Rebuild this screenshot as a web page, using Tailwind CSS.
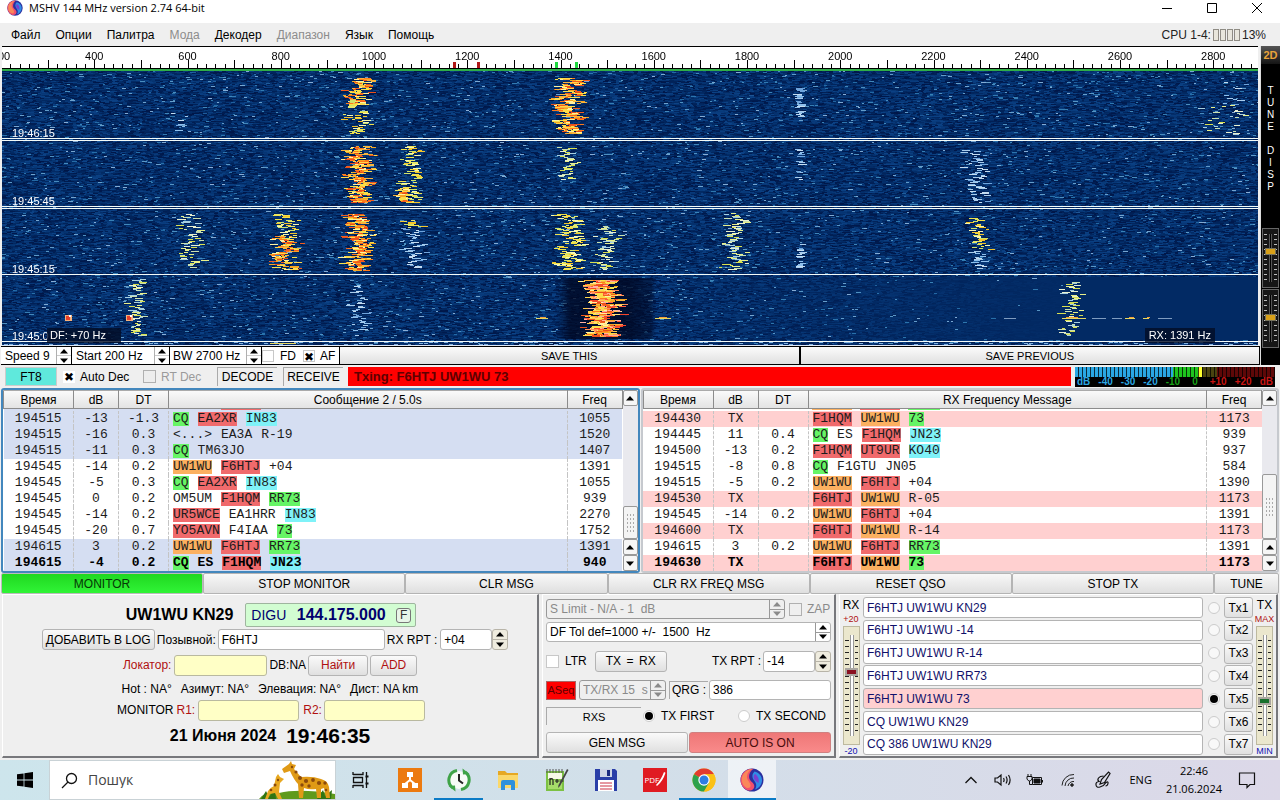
<!DOCTYPE html>
<html lang="ru">
<head>
<meta charset="utf-8">
<title>MSHV 144 MHz version 2.74 64-bit</title>
<script src="https://cdn.jsdelivr.net/npm/@tailwindcss/browser@4"></script>
</head>
<body class="min-h-screen flex flex-col overflow-x-hidden bg-[#efefef] text-black text-[12px] leading-4 font-['Liberation_Sans',sans-serif]">

<svg class="hidden" aria-hidden="true">
  <symbol id="up" viewBox="0 0 8 5"><path d="M4 0L8 4.5H0z" fill="currentColor"/></symbol>
  <symbol id="down" viewBox="0 0 8 5"><path d="M0 .5H8L4 5z" fill="currentColor"/></symbol>
  <symbol id="mshv" viewBox="0 0 24 24">
    <circle cx="12" cy="12" r="11.5" fill="#2b2f9e"/>
    <path d="M14 .8C6.500 0 .8 5 .6 12c0 5 3 9 7.500 10.500 4 .5 7-2 6-5.500-.8-3-5-4-5-8C9.100 5.500 11 2 14 .8z" fill="#f0506c"/>
    <path d="M12.500 1C6 1.500 2 6 1.800 11.500c0 4 2 7 5 8.500 3 .5 4.500-1.500 3.500-4C9 13 6.500 11.500 7 8c.4-3 2.500-6 5.500-7z" fill="#f9885a"/>
    <path d="M14.500 3.500c4.500 1 8 5 7.500 9.500-.5 4-3.500 7.500-7 8.500 2-3 1.500-6-.5-8.500-2.500-3-3-6.500 0-9.500z" fill="#2f8de6"/>
    <path d="M15 6c3 2 4.500 5 3.500 9-2-1-4.500-3-4.800-5.500C13.500 8 14 7 15 6z" fill="#7a3fd0"/>
  </symbol>
</svg>

<header class="h-[23px] bg-white flex items-start justify-between pl-[7px]">
  <div class="flex items-center gap-[6px]">
    <svg class="size-4"><use href="#mshv"/></svg>
    <h1 class="font-['Open_Sans',sans-serif] text-[11px] leading-4">MSHV 144 MHz version 2.74 64-bit</h1>
  </div>
  <div class="flex">
    <button aria-label="Minimize" class="w-[45px] h-4 grid place-items-center"><svg class="size-3" viewBox="0 0 12 12" fill="none" stroke="#000"><path d="M1 6.500h10"/></svg></button>
    <button aria-label="Maximize" class="w-[45px] h-4 grid place-items-center"><svg class="size-3" viewBox="0 0 12 12" fill="none" stroke="#000"><path d="M1.500 1.500h9v9h-9z"/></svg></button>
    <button aria-label="Close" class="w-[46px] h-4 grid place-items-center"><svg class="size-3" viewBox="0 0 12 12" fill="none" stroke="#000"><path d="M1 1l10 10M11 1L1 11"/></svg></button>
  </div>
</header>

<nav class="h-[23px] flex items-center justify-between pl-[11px] pr-[14px]">
  <div class="flex gap-[15px]">
    <button>Файл</button><button>Опции</button><button>Палитра</button><button class="text-[#8c8c8c]" disabled>Мода</button><button>Декодер</button><button class="text-[#8c8c8c]" disabled>Диапазон</button><button>Язык</button><button>Помощь</button>
  </div>
  <div class="flex items-center gap-[2px] text-[#222]">CPU 1-4:
    <span class="flex gap-px"><i class="w-[6px] h-3 border border-[#8f8c84] bg-[#e8e6dc]"></i><i class="w-[6px] h-3 border border-[#8f8c84] bg-[#e8e6dc]"></i><i class="w-[6px] h-3 border border-[#8f8c84] bg-[#e8e6dc]"></i><i class="w-[6px] h-3 border border-[#8f8c84] bg-[#e8e6dc]"></i></span>13%
  </div>
</nav>

<main class="flex flex-col">
  <section class="flex">
    <div class="flex-1 min-w-0 flex flex-col">
      <div class="relative h-[25px] ml-[2px] mr-[2px] bg-white border-t border-black border-b-2 border-b-[#2fae48] overflow-hidden">
        <canvas id="ruler" width="1256" height="22" class="block w-full h-[22px]"></canvas>
        <div id="marks"></div>
      </div>
      <div class="relative mx-[2px] border-b border-[#dfe8f5]">
        <canvas id="fall" width="1256" height="274" class="block w-full h-[274px] [image-rendering:pixelated]"></canvas>
        <div class="absolute inset-0 text-white text-[11px] leading-3">
          <span class="absolute left-[10px] top-[56px]">19:46:15</span>
          <span class="absolute left-[10px] top-[124px]">19:45:45</span>
          <span class="absolute left-[10px] top-[192px]">19:45:15</span>
          <span class="absolute left-[10px] top-[259px]">19:45:0</span>
          <span class="absolute left-[45px] top-[257px] w-[74px] h-[15px] pl-[3px] leading-[15px] bg-[#020c24]/80">DF: +70 Hz</span>
          <span class="absolute right-[43px] top-[257px] h-[15px] px-1 leading-[15px] bg-[#020c24]/80">RX: 1391 Hz</span>
        </div>
      </div>
      <div class="flex h-[19px] ml-[1px] border-y border-black bg-black gap-px">
        <div class="w-[70px] flex bg-white">
          <input aria-label="Speed" value="Speed 9" class="flex-1 min-w-0 pl-[4px] outline-none">
          <span class="w-[15px] flex flex-col border-l border-[#b0b0b0]"><button aria-label="Speed up" class="flex-1 grid place-items-center border-b border-[#ccc]"><svg class="w-2 h-[5px]"><use href="#up"/></svg></button><button aria-label="Speed down" class="flex-1 grid place-items-center"><svg class="w-2 h-[5px]"><use href="#down"/></svg></button></span>
        </div>
        <div class="w-[97px] flex bg-white">
          <input aria-label="Start frequency" value="Start 200 Hz" class="flex-1 min-w-0 pl-[4px] outline-none">
          <span class="w-[15px] flex flex-col border-l border-[#b0b0b0]"><button aria-label="Start up" class="flex-1 grid place-items-center border-b border-[#ccc]"><svg class="w-2 h-[5px]"><use href="#up"/></svg></button><button aria-label="Start down" class="flex-1 grid place-items-center"><svg class="w-2 h-[5px]"><use href="#down"/></svg></button></span>
        </div>
        <div class="w-[91px] flex bg-white">
          <input aria-label="Bandwidth" value="BW 2700 Hz" class="flex-1 min-w-0 pl-[3px] outline-none">
          <span class="w-[15px] flex flex-col border-l border-[#b0b0b0]"><button aria-label="Bandwidth up" class="flex-1 grid place-items-center border-b border-[#ccc]"><svg class="w-2 h-[5px]"><use href="#up"/></svg></button><button aria-label="Bandwidth down" class="flex-1 grid place-items-center"><svg class="w-2 h-[5px]"><use href="#down"/></svg></button></span>
        </div>
        <div class="w-[77px] flex items-center bg-white gap-[7px]">
          <label class="flex items-center gap-[6px]"><input type="checkbox" class="appearance-none size-3 border border-[#c8c8c8] bg-white">FD</label>
          <label class="flex items-center gap-[5px]"><input type="checkbox" checked class="appearance-none size-3 border border-[#c8c8c8] bg-white grid place-items-center checked:before:content-['✖'] before:text-[12px] before:leading-3 before:font-['DejaVu_Sans']">AF</label>
        </div>
        <button class="flex-1 text-[11px] bg-linear-to-b from-[#fbfbfb] to-[#e0e0e0]">SAVE THIS</button>
        <button class="flex-1 text-[11px] ml-px mr-px bg-linear-to-b from-[#fbfbfb] to-[#e0e0e0]">SAVE PREVIOUS</button>
      </div>
    </div>
    <aside class="w-5 bg-black flex flex-col items-center text-white text-[10px] leading-3 border-l border-[#ddd]">
      <button class="w-full h-[18px] bg-linear-to-b from-[#555] to-[#151515] text-[#e8a33a] text-[11px] font-bold">2D</button>
      <button class="w-3 mt-[21px] flex flex-col items-center"><span>T</span><span>U</span><span>N</span><span>E</span></button>
      <button class="w-3 mt-3 flex flex-col items-center"><span>D</span><span>I</span><span>S</span><span>P</span></button>
      <div class="mt-[35px] w-[17px] h-[60px] py-[5px] border border-[#666] bg-[#161616]">
        <input type="range" aria-label="Gain" value="66" class="block appearance-none w-full h-full [writing-mode:vertical-lr] [direction:rtl] bg-[linear-gradient(90deg,#161616_0_1px,transparent_1px_4px,#161616_4px_6px,#555_6px_7px,#000_7px_8px,#555_8px_9px,#161616_9px_11px,transparent_11px_14px,#161616_14px),repeating-linear-gradient(180deg,#bbb_0_1px,transparent_1px_5px)] [&::-webkit-slider-thumb]:appearance-none [&::-webkit-slider-thumb]:w-[11px] [&::-webkit-slider-thumb]:h-[7px] [&::-webkit-slider-thumb]:bg-[#d8a018] [&::-webkit-slider-thumb]:border [&::-webkit-slider-thumb]:border-[#77735c]">
      </div>
      <div class="mt-px w-[17px] h-[59px] py-[5px] border border-[#666] bg-[#161616]">
        <input type="range" aria-label="Zero" value="53" class="block appearance-none w-full h-full [writing-mode:vertical-lr] [direction:rtl] bg-[linear-gradient(90deg,#161616_0_1px,transparent_1px_4px,#161616_4px_6px,#555_6px_7px,#000_7px_8px,#555_8px_9px,#161616_9px_11px,transparent_11px_14px,#161616_14px),repeating-linear-gradient(180deg,#bbb_0_1px,transparent_1px_5px)] [&::-webkit-slider-thumb]:appearance-none [&::-webkit-slider-thumb]:w-[11px] [&::-webkit-slider-thumb]:h-[7px] [&::-webkit-slider-thumb]:bg-[#d8a018] [&::-webkit-slider-thumb]:border [&::-webkit-slider-thumb]:border-[#77735c]">
      </div>
    </aside>
  </section>

  <section class="h-[23px] flex items-center pl-[5px] pr-[5px]">
    <button class="w-[52px] h-[19px] bg-[#5fe9dc] border border-[#ccc]">FT8</button>
    <label class="ml-[6px] w-[79px] flex items-center gap-[5px]"><input type="checkbox" checked class="appearance-none size-3 bg-white grid place-items-center checked:before:content-['✖'] before:text-[12px] before:leading-3 before:font-['DejaVu_Sans']">Auto Dec</label>
    <label class="ml-px w-[66px] flex items-center gap-[5px] text-[#9a9a9a]"><input type="checkbox" disabled class="appearance-none size-[13px] border border-[#b0b0b0] bg-[#ededed]">RT Dec</label>
    <button class="ml-2 w-[60px] h-[19px] border-l border-t border-[#aaa]">DECODE</button>
    <button class="ml-[6px] w-[60px] h-[19px] border-l border-t border-[#aaa]">RECEIVE</button>
    <div class="ml-[5px] flex-1 h-[19px] pl-[6px] flex items-center bg-[#ff0000] text-[#5e0000] text-[13px] font-bold">Txing: F6HTJ UW1WU 73</div>
    <div class="ml-1 w-[200px] h-5 bg-black flex flex-col">
      <div class="h-[10px] bg-[repeating-linear-gradient(90deg,transparent_0_3px,rgba(0,0,0,.75)_3px_4px),linear-gradient(90deg,#2aa7e4_0_98px,#1ec41e_98px_123px,#ffff30_123px_127px,#4a4410_127px_142px,#5e0808_142px)]"></div>
      <div class="flex h-[10px] justify-between items-center px-[2px] text-[10px] leading-[10px] font-bold text-[#2aa7e4]"><span>dB</span><span>-40</span><span>-30</span><span>-20</span><span class="text-[#17a017]">-10</span><span class="text-[#17a017] px-1">0</span><span class="text-[#c81414]">+10</span><span class="text-[#c81414]">+20</span><span class="text-[#c81414]">dB</span></div>
    </div>
  </section>

  <section class="grid grid-cols-2 gap-px px-px">
    <div class="flex h-[185px] border-2 border-[#4387bd] rounded-[3px] bg-white overflow-hidden">
      <table class="flex-1 table-fixed border-collapse self-start w-full">
        <colgroup><col class="w-[70px]"><col class="w-[45px]"><col class="w-[50px]"><col><col class="w-[55px]"></colgroup>
        <thead><tr class="h-[18px] bg-linear-to-b from-[#fafafa] to-[#e2e2e2]"><th class="font-normal border border-t-[#aaa] border-[#8c8c8c]">Время</th><th class="font-normal border border-t-[#aaa] border-[#8c8c8c]">dB</th><th class="font-normal border border-t-[#aaa] border-[#8c8c8c]">DT</th><th class="font-normal border border-t-[#aaa] border-[#8c8c8c]">Сообщение 2 / 5.0s</th><th class="font-normal border border-t-[#aaa] border-[#8c8c8c]">Freq</th></tr></thead>
        <tbody id="left" class="font-['Liberation_Mono','Liberation_Sans',monospace] text-[13px] leading-[14px] text-[#1c1c1c] text-center"></tbody>
      </table>
      <div class="w-[15px] flex flex-col bg-[#e9e9ee]">
        <button aria-label="Scroll up" class="h-4 border border-[#999] bg-[#f6f6f6] rounded-xs grid place-items-center"><svg class="w-2 h-[5px]"><use href="#up"/></svg></button>
        <div class="mt-auto h-[33px] border border-[#999] bg-[#f4f4f4] rounded-xs p-[2px] grid place-items-center"><i class="w-2.5 h-5 bg-[radial-gradient(#aaa_1px,transparent_1px)] bg-size-[3px_4px]"></i></div>
        <button aria-label="Line up" class="h-4 border border-[#999] bg-[#f6f6f6] rounded-xs grid place-items-center"><svg class="w-2 h-[5px]"><use href="#up"/></svg></button>
        <button aria-label="Line down" class="h-4 border border-[#999] bg-[#f6f6f6] rounded-xs grid place-items-center"><svg class="w-2 h-[5px]"><use href="#down"/></svg></button>
      </div>
    </div>
    <div class="flex h-[185px] border-2 border-[#c6c9ce] rounded-[3px] bg-white overflow-hidden">
      <table class="flex-1 table-fixed border-collapse self-start w-full">
        <colgroup><col class="w-[70px]"><col class="w-[45px]"><col class="w-[50px]"><col><col class="w-[55px]"></colgroup>
        <thead><tr class="h-[18px] bg-linear-to-b from-[#fafafa] to-[#e2e2e2]"><th class="font-normal border border-t-[#aaa] border-[#8c8c8c]">Время</th><th class="font-normal border border-t-[#aaa] border-[#8c8c8c]">dB</th><th class="font-normal border border-t-[#aaa] border-[#8c8c8c]">DT</th><th class="font-normal border border-t-[#aaa] border-[#8c8c8c]">RX Frequency Message</th><th class="font-normal border border-t-[#aaa] border-[#8c8c8c]">Freq</th></tr></thead>
        <tbody id="right" class="font-['Liberation_Mono','Liberation_Sans',monospace] text-[13px] leading-[14px] text-[#1c1c1c] text-center"></tbody>
      </table>
      <div class="w-[15px] flex flex-col bg-[#e9e9ee]">
        <button aria-label="Scroll up" class="h-4 border border-[#999] bg-[#f6f6f6] rounded-xs grid place-items-center"><svg class="w-2 h-[5px]"><use href="#up"/></svg></button>
        <div class="mt-auto h-[65px] border border-[#999] bg-[#f4f4f4] rounded-xs p-[2px] grid place-items-center"><i class="w-2.5 h-5 bg-[radial-gradient(#aaa_1px,transparent_1px)] bg-size-[3px_4px]"></i></div>
        <button aria-label="Line up" class="h-4 border border-[#999] bg-[#f6f6f6] rounded-xs grid place-items-center"><svg class="w-2 h-[5px]"><use href="#up"/></svg></button>
        <button aria-label="Line down" class="h-4 border border-[#999] bg-[#f6f6f6] rounded-xs grid place-items-center"><svg class="w-2 h-[5px]"><use href="#down"/></svg></button>
      </div>
    </div>
  </section>

  <section class="h-[21px] grid grid-cols-[repeat(6,1fr)_65px] px-px">
    <button class="border border-[#bbb] rounded-xs bg-linear-to-b from-[#1fd81f] to-[#30f436] text-[#063806]">MONITOR</button>
    <button class="border border-[#b4b4b4] rounded-xs bg-linear-to-b from-[#f8f8f8] to-[#dfdfdf]">STOP MONITOR</button>
    <button class="border border-[#b4b4b4] rounded-xs bg-linear-to-b from-[#f8f8f8] to-[#dfdfdf]">CLR MSG</button>
    <button class="border border-[#b4b4b4] rounded-xs bg-linear-to-b from-[#f8f8f8] to-[#dfdfdf]">CLR RX FREQ MSG</button>
    <button class="border border-[#b4b4b4] rounded-xs bg-linear-to-b from-[#f8f8f8] to-[#dfdfdf]">RESET QSO</button>
    <button class="border border-[#b4b4b4] rounded-xs bg-linear-to-b from-[#f8f8f8] to-[#dfdfdf]">STOP TX</button>
    <button class="border border-[#b4b4b4] rounded-xs bg-linear-to-b from-[#f8f8f8] to-[#dfdfdf]">TUNE</button>
  </section>

  <section class="flex gap-[3px] px-[2px]">
    <div class="flex-1 h-[164px] flex flex-col items-center pt-2 border-l border-t border-l-white border-t-white border-r-2 border-b-2 border-r-[#77787c] border-b-[#77787c]">
      <div class="flex items-center gap-3 h-6 pl-[2px]">
        <strong class="text-[16px]">UW1WU KN29</strong>
        <div class="w-[171px] h-6 flex items-center justify-between pl-[5px] pr-1 rounded-xs border border-[#9fb59f] bg-[#d2fdd2] text-[#00006e]"><span class="text-[14px]">DIGU</span><strong class="text-[16px]">144.175.000</strong><button class="size-[15px] leading-[13px] border border-[#777] rounded-[3px] text-[#333] bg-[#e8f5e8]">F</button></div>
      </div>
      <div class="flex items-center h-[25px] pl-[10px]">
        <button class="h-[21px] w-[113px] border border-[#b4b4b4] rounded-[3px] bg-linear-to-b from-[#fafafa] to-[#e0e0e0]">ДОБАВИТЬ В LOG</button>
        <label for="call" class="ml-[2px]">Позывной:</label><input id="call" value="F6HTJ" class="ml-[2px] w-[167px] h-[21px] px-[3px] border border-[#b4b4b4] rounded-[3px] bg-white outline-none">
        <label for="rxrpt" class="ml-[2px]">RX RPT :</label><input id="rxrpt" value="+04" class="ml-[3px] w-[52px] h-[21px] px-[3px] border border-[#b4b4b4] rounded-[3px] bg-white outline-none">
        <span class="w-4 h-[21px] flex flex-col border border-[#b8b4a8] rounded-[3px] bg-[#efecdf]"><button aria-label="RX report up" class="flex-1 grid place-items-center border-b border-[#b8b4a8]"><svg class="w-2 h-[5px]"><use href="#up"/></svg></button><button aria-label="RX report down" class="flex-1 grid place-items-center"><svg class="w-2 h-[5px]"><use href="#down"/></svg></button></span>
      </div>
      <div class="flex items-center h-[26px]">
        <label for="loc" class="text-[#b01010]">Локатор:</label><input id="loc" class="ml-[3px] w-[93px] h-[21px] border border-[#b9b9a0] rounded-[3px] bg-[#ffffc6] outline-none"><span class="mx-[2px]">DB:NA</span>
        <button class="w-[60px] h-[21px] border border-[#b4b4b4] rounded-[3px] bg-linear-to-b from-[#fafafa] to-[#e0e0e0] text-[#b01010]">Найти</button>
        <button class="ml-[2px] w-[47px] h-[21px] border border-[#b4b4b4] rounded-[3px] bg-linear-to-b from-[#fafafa] to-[#e0e0e0] text-[#b01010]">ADD</button>
      </div>
      <div class="flex items-center gap-[9px] h-[21px]"><span>Hot : NA°</span><span>Азимут: NA°</span><span>Элевация: NA°</span><span>Дист: NA km</span></div>
      <div class="flex items-center h-[22px] pl-[2px]">
        <span>MONITOR</span><label for="r1" class="ml-[3px] text-[#b01010]">R1:</label><input id="r1" class="ml-[3px] w-[101px] h-[21px] border border-[#b9b9a0] rounded-[3px] bg-[#ffffc6] outline-none">
        <label for="r2" class="ml-1 text-[#b01010]">R2:</label><input id="r2" class="ml-[2px] w-[101px] h-[21px] border border-[#b9b9a0] rounded-[3px] bg-[#ffffc6] outline-none">
      </div>
      <div class="flex items-center gap-[10px] h-[29px] font-bold"><span class="text-[16px]">21 Июня 2024</span><time class="text-[21px]">19:46:35</time></div>
    </div>

    <div class="w-[294px] h-[164px] flex flex-col px-[3px] pt-1 border-l border-t border-l-white border-t-white border-r-2 border-b-2 border-r-[#77787c] border-b-[#77787c]">
      <div class="flex items-center gap-1 text-[#8a8a8a]">
        <div class="w-[239px] h-5 flex border border-[#999] rounded-[3px]"><input aria-label="S Limit" disabled value="S Limit - N/A - 1  dB" class="flex-1 min-w-0 pl-[3px]"><span class="w-[15px] flex flex-col border-l border-[#999]"><button disabled aria-label="Limit up" class="flex-1 grid place-items-center border-b border-[#999]"><svg class="w-2 h-[5px]"><use href="#up"/></svg></button><button disabled aria-label="Limit down" class="flex-1 grid place-items-center"><svg class="w-2 h-[5px]"><use href="#down"/></svg></button></span></div>
        <label class="flex items-center gap-[5px]"><input type="checkbox" disabled class="appearance-none size-[13px] border border-[#b0b0b0]">ZAP</label>
      </div>
      <div class="mt-[3px] h-5 flex border border-[#b4b4b4] rounded-[3px] bg-white"><input aria-label="DF tolerance" value="DF Tol def=1000 +/-  1500  Hz" class="flex-1 min-w-0 pl-[3px] outline-none"><span class="w-[15px] flex flex-col border-l border-[#999]"><button aria-label="Tolerance up" class="flex-1 grid place-items-center border-b border-[#999]"><svg class="w-2 h-[5px]"><use href="#up"/></svg></button><button aria-label="Tolerance down" class="flex-1 grid place-items-center"><svg class="w-2 h-[5px]"><use href="#down"/></svg></button></span></div>
      <div class="h-[38px] flex items-center">
        <label class="flex items-center gap-[6px]"><input type="checkbox" class="appearance-none size-[13px] border border-[#c8c8c8] bg-white">LTR</label>
        <div class="ml-2 w-[72px] h-[21px] flex items-center justify-between px-[10px] border border-[#b4b4b4] rounded-[3px] bg-linear-to-b from-[#fafafa] to-[#e0e0e0]"><button>TX</button><span>=</span><button>RX</button></div>
        <label for="txrpt" class="ml-auto">TX RPT :</label><input id="txrpt" value="-14" class="ml-[2px] w-[52px] h-[21px] px-[3px] border border-[#b4b4b4] rounded-[3px] bg-white outline-none">
        <span class="w-4 h-[21px] flex flex-col border border-[#b8b4a8] rounded-[3px] bg-[#efecdf]"><button aria-label="TX report up" class="flex-1 grid place-items-center border-b border-[#b8b4a8]"><svg class="w-2 h-[5px]"><use href="#up"/></svg></button><button aria-label="TX report down" class="flex-1 grid place-items-center"><svg class="w-2 h-[5px]"><use href="#down"/></svg></button></span>
      </div>
      <div class="h-5 flex items-center">
        <button class="w-[30px] h-[19px] border border-[#a66] bg-[#ff0000] text-[#5e0000] text-[11px]">ASeq</button>
        <div class="ml-[3px] w-[87px] h-5 flex border border-[#999] rounded-[3px] text-[#8a8a8a]"><input aria-label="Period" disabled value="TX/RX 15  s" class="flex-1 min-w-0 pl-[3px]"><span class="w-[15px] flex flex-col border-l border-[#999]"><button disabled aria-label="Period up" class="flex-1 grid place-items-center border-b border-[#999]"><svg class="w-2 h-[5px]"><use href="#up"/></svg></button><button disabled aria-label="Period down" class="flex-1 grid place-items-center"><svg class="w-2 h-[5px]"><use href="#down"/></svg></button></span></div>
        <label for="qrg" class="ml-[3px] w-[39px] h-[18px] pl-[2px] border-l border-t border-[#aaa]">QRG :</label><input id="qrg" value="386" class="ml-px flex-1 min-w-0 h-5 px-[3px] border border-[#b4b4b4] rounded-[3px] bg-white outline-none">
      </div>
      <div class="h-8 flex items-center">
        <span class="w-[95px] h-[18px] text-center text-[11px] leading-[18px] border-l border-t border-[#aaa]">RXS</span>
        <label class="ml-[2px] flex items-center gap-[6px]"><input type="radio" name="turn" checked class="appearance-none size-3 rounded-full border border-[#ccc] bg-white grid place-items-center before:size-2 before:rounded-full checked:before:bg-black">TX FIRST</label>
        <label class="ml-auto pr-[5px] flex items-center gap-[6px]"><input type="radio" name="turn" class="appearance-none size-3 rounded-full border border-[#ccc] bg-white grid place-items-center before:size-2 before:rounded-full checked:before:bg-black">TX SECOND</label>
      </div>
      <div class="h-[21px] flex gap-px">
        <button class="flex-1 border border-[#b4b4b4] rounded-[3px] bg-linear-to-b from-[#fafafa] to-[#e0e0e0]">GEN MSG</button>
        <button class="flex-1 border border-[#d08080] rounded-[3px] bg-linear-to-b from-[#ee7777] to-[#f98a8a] text-[#4a0c0c]">AUTO IS ON</button>
      </div>
    </div>

    <div class="w-[439px] h-[164px] flex justify-between px-[2px] pt-[2px] border-l border-t border-l-white border-t-white border-r-2 border-b-2 border-r-[#77787c] border-b-[#77787c]">
      <div class="w-[18px] flex flex-col items-center pt-[2px]">
        <span class="leading-[13px]">RX</span><span class="text-[9px] leading-[14px] text-[#b01010]">+20</span>
        <div class="w-[17px] h-[119px] py-2 border border-[#bdb99f] bg-[#ebe7cd]">
          <input type="range" aria-label="RX level" value="64" class="block appearance-none w-full h-full [writing-mode:vertical-lr] [direction:rtl] bg-[linear-gradient(90deg,#ebe7cd_0_1px,transparent_1px_5px,#ebe7cd_5px_6px,#999_6px_7px,#fff_7px_9px,#999_9px_10px,#ebe7cd_10px_11px,transparent_11px_14px,#ebe7cd_14px),repeating-linear-gradient(180deg,#ebe7cd_0_5px,#222_5px_6px)] [&::-webkit-slider-thumb]:appearance-none [&::-webkit-slider-thumb]:w-[13px] [&::-webkit-slider-thumb]:h-2 [&::-webkit-slider-thumb]:bg-[#8a1020] [&::-webkit-slider-thumb]:border-2 [&::-webkit-slider-thumb]:border-[#aaa6a0]">
        </div>
        <span class="text-[9px] leading-3 text-[#1010b0]">-20</span>
      </div>
      <div id="tx" class="flex-1 ml-[3px] flex flex-col justify-between pb-px"></div>
      <div class="ml-[2px] w-[19px] flex flex-col items-center pt-[2px]">
        <span class="leading-[13px]">TX</span><span class="text-[9px] leading-[14px] text-[#b01010]">MAX</span>
        <div class="w-[17px] h-[119px] py-2 border border-[#bdb99f] bg-[#ebe7cd]">
          <input type="range" aria-label="TX level" value="33" class="block appearance-none w-full h-full [writing-mode:vertical-lr] [direction:rtl] bg-[linear-gradient(90deg,#ebe7cd_0_1px,transparent_1px_5px,#ebe7cd_5px_6px,#999_6px_7px,#fff_7px_9px,#999_9px_10px,#ebe7cd_10px_11px,transparent_11px_14px,#ebe7cd_14px),repeating-linear-gradient(180deg,#ebe7cd_0_5px,#222_5px_6px)] [&::-webkit-slider-thumb]:appearance-none [&::-webkit-slider-thumb]:w-[13px] [&::-webkit-slider-thumb]:h-2 [&::-webkit-slider-thumb]:bg-[#18702c] [&::-webkit-slider-thumb]:border-2 [&::-webkit-slider-thumb]:border-[#aaa6a0]">
        </div>
        <span class="text-[9px] leading-3 text-[#1010b0]">MIN</span>
      </div>
    </div>
  </section>
</main>

<footer class="mt-auto h-10 flex items-center bg-linear-to-r from-[#cde5ec] via-[#d2dfe9] to-[#dcd8e8] font-['Open_Sans',sans-serif]">
  <button aria-label="Start" class="w-[49px] h-10 grid place-items-center"><svg class="size-4" viewBox="0 0 16 16" fill="#000"><path d="M0 2.300l6.600-.9v6.200H0zM7.400 1.300L16 0v7.600H7.400zM0 8.400h6.600v6.200L0 13.700zM7.400 8.400H16V16l-8.600-1.200z"/></svg></button>
  <div class="w-[287px] h-10 pl-[11px] flex items-center bg-white border border-[#c9d2d6]">
    <svg class="size-[17px]" viewBox="0 0 17 17" fill="none" stroke="#111" stroke-width="1.300"><circle cx="10.500" cy="6.500" r="5"/><path d="M7 10L1 16"/></svg>
    <input aria-label="Пошук" placeholder="Пошук" class="ml-[10px] flex-1 min-w-0 text-[14px] placeholder:text-[#444] outline-none">
    <svg class="w-[76px] h-[38px]" viewBox="0 0 76 38">
      <path d="M0 38Q6 30 20 32Q40 27 76 33V38z" fill="#5f9a1c"/>
      <path d="M2 38l5-8 3 6 6-8 1 10M58 38l6-9 2 6 7-6-1 9" fill="#2f7414"/>
      <path d="M30 3l2-3 1 3 4 1-2 4 7 8q12-1 20 2 7 2 8 8l1 11h-4l-2-10-3 1 0 9h-4l-1-9q-7 1-12-1l-1 10h-4l-1-14q-4-4-8-13l-6 2-2-4z" fill="#e09a16"/>
      <path d="M17 16l2-3 2 3 4 2-4 4-1 9 3 7h-4l-3-6-5 1-2 5H6l3-8q3-4 6-5z" fill="#e8a820"/>
      <g fill="#8b4a0c"><circle cx="37" cy="11" r="1.600"/><circle cx="41" cy="17" r="2"/><circle cx="47" cy="20" r="2.100"/><circle cx="54" cy="19" r="1.900"/><circle cx="60" cy="22" r="2.100"/><circle cx="66" cy="22" r="1.700"/><circle cx="50" cy="25" r="1.700"/><circle cx="43" cy="24" r="1.700"/><circle cx="67" cy="29" r="1.300"/><circle cx="33" cy="6" r="1.200"/><circle cx="16" cy="24" r="1.500"/><circle cx="12" cy="29" r="1.300"/><circle cx="19" cy="19" r="1.200"/></g>
    </svg>
  </div>
  <div class="flex h-10">
    <button aria-label="Task view" class="w-[49px] grid place-items-center"><svg class="size-[18px]" viewBox="0 0 18 18" fill="none" stroke="#111" stroke-width="1.300"><path d="M1 4V1M1 3.500h10V1M1 17v-3M1 14.500h10V17M1.500 6.500h9v5h-9zM14.500 1v16"/><path d="M13.500 5.500h3M13.500 12.500h3" stroke-width="2"/></svg></button>
    <button aria-label="Network" class="w-[49px] grid place-items-center"><svg class="size-6" viewBox="0 0 24 24"><path d="M0 0h24v24H0z" fill="#ec7a10"/><path d="M12 7v5L7 16M12 12l5 4" stroke="#fff" stroke-width="2" fill="none"/><path d="M9 4h6v5H9zM4 15h6v5H4zM14 15h6v5h-6z" fill="#fff"/></svg></button>
    <button aria-label="Time sync" class="w-[49px] grid place-items-center border-b-2 border-[#0b7bc6] pt-0.5"><svg class="size-6" viewBox="0 0 24 24" fill="none"><circle cx="12" cy="12" r="9" fill="#f7fbf7"/><path d="M10 2.500A9.700 9.700 0 0 0 6 20M14 21.500A9.700 9.700 0 0 0 18 4" stroke="#3fa348" stroke-width="3"/><path d="M1.500 18l6.500-.5.5 6zM22.500 6L16 6.500l-.5-6z" fill="#3fa348"/><path d="M12 6v6.500l4 3" stroke="#222" stroke-width="2"/></svg></button>
    <button aria-label="Explorer" class="w-[49px] grid place-items-center"><svg class="size-6" viewBox="0 0 24 24"><path d="M2 3h7l2 2h11v15H2z" fill="#e6a823"/><path d="M2 7h20v13H2z" fill="#fbd86a"/><path d="M5 22v-8q0-2 2-2h10q2 0 2 2v8h-4v-5H9v5z" fill="#2f91dc"/></svg></button>
    <button aria-label="Notepad++" class="w-[49px] grid place-items-center"><svg class="size-6" viewBox="0 0 24 24"><path d="M1 3h18v20H1z" fill="#7cc143"/><path d="M3 5h14v6H3z" fill="#f7f9e8"/><path d="M3 12h14v9H3z" fill="#a6dd6a"/><path d="M2 1v4M5 1v4M8 1v4M11 1v4M14 1v4M17 1v4" stroke="#555"/><path d="M5 10v7M5 11.500q3-2 3 1V17M10 13h4M12 11v4M14.500 13h4" stroke="#222" stroke-width="1.200" fill="none"/><path d="M22 1l1.500 1L15 18l-2 2 .5-3z" fill="#444"/></svg></button>
    <button aria-label="Total Commander" class="w-[49px] grid place-items-center"><svg class="size-6" viewBox="0 0 24 24"><path d="M1 1h20l2 2v20H1z" fill="#2a3fa8"/><path d="M6 1h12v8H6z" fill="#cfd6e6"/><path d="M13 2h3v6h-3z" fill="#1b2b80"/><path d="M4 12h16v11H4z" fill="#fff"/><path d="M6 15h12M6 18h12M6 21h12" stroke="#c34" stroke-width="1"/></svg></button>
    <button aria-label="PDF" class="w-[49px] grid place-items-center"><span class="w-6 h-6 relative bg-[#e01b22] text-white text-[8px] leading-6 text-left pl-0.5">PDF<svg class="absolute inset-0 size-6" viewBox="0 0 24 24"><path d="M13 17Q18 12 21 4l1.500.7Q20 13 14 18z" fill="#fff"/></svg></span></button>
    <button aria-label="Chrome" class="w-[49px] grid place-items-center border-b-2 border-[#0b7bc6] pt-0.5"><svg class="size-6" viewBox="0 0 24 24"><circle cx="12" cy="12" r="11.500" fill="#fbc116"/><path d="M12 12L2.040 6.250A11.500 11.500 0 0 1 21.960 6.250H12z" fill="#e33b2e"/><path d="M12 12l-9.960-5.750A11.500 11.500 0 0 0 12 23.500l5-8.600z" fill="#2da14c"/><path d="M12 6.250h9.960A11.500 11.500 0 0 1 12 23.500l5-8.600z" fill="#fbc116"/><circle cx="12" cy="12" r="5.700" fill="#fff"/><circle cx="12" cy="12" r="4.500" fill="#2f7de1"/></svg></button>
    <button aria-label="MSHV" class="w-[48px] grid place-items-center border-b-2 border-[#0b7bc6] bg-white/60 pt-0.5"><svg class="size-6"><use href="#mshv"/></svg></button>
  </div>
  <div class="ml-auto flex items-center text-[11px] leading-4 pr-[24px]">
    <svg class="size-[14px]" viewBox="0 0 14 14" fill="none" stroke="#111" stroke-width="1.300"><path d="M1.500 10L7 4.500 12.500 10"/></svg>
    <svg class="ml-[16px] w-[18px] h-4" viewBox="0 0 18 16" fill="none" stroke="#111" stroke-width="1.200"><path d="M1 6v4h2.500L7 13V3L3.500 6zM9.500 6q1.200 2 0 4M12 4.500q2.200 3.500 0 7M14.500 3q3.200 5 0 10"/></svg>
    <svg class="ml-[14px] w-[18px] h-4" viewBox="0 0 18 16" fill="none" stroke="#111"><path d="M6.500 5.500h9v7h-9z"/><path d="M8 7h6v4H8z" fill="#111"/><path d="M16.500 8v2.500M2 2v2.500M5 2v2.500M1 4.500h5v2.500q-1 2-2.500 2T1 7zM3.500 9v3.500h3"/></svg>
    <svg class="ml-[16px] size-4" viewBox="0 0 16 16" fill="none" stroke="#222"><path d="M2 13.500A11.500 11.500 0 0 1 14 2.500M5 14a8.500 8.500 0 0 1 9-8M8 14a5.500 5.500 0 0 1 6-4.500"/><circle cx="12" cy="13" r="1.300" fill="#222"/></svg>
    <svg class="ml-[18px] size-[18px]" viewBox="0 0 18 18" fill="none" stroke="#111" stroke-width="1.200"><path d="M16 2.500L14.500 1 7.500 8.500 6 13l4.500-1.500zM9.500 5Q6 5 4.500 7T5 10.500Q1.500 11 2 14t4 2q4-1 6-4.500Q14.500 10 14 12.500T11.500 15"/></svg>
    <button class="ml-[17px]">ENG</button>
    <div class="ml-[14px] text-center leading-[18px]"><div>22:46</div><div>21.06.2024</div></div>
    <svg class="ml-[16px] size-[18px]" viewBox="0 0 18 18" fill="none" stroke="#111" stroke-width="1.200"><path d="M1.500 2h15v11.500H12L9 16.500v-3H1.500z"/></svg>
  </div>
</footer>

<script>
// Decoded messages: time, dB, DT, coloured words, frequency, row tint
const chip = {
  g: 'bg-[#66f566]', r: 'bg-[#f06a6c]', o: 'bg-[#fbb060]', c: 'bg-[#7ff2f8]', n: ''
};
const tint = { b: 'bg-[#d5def2]', w: 'bg-white', p: 'bg-[#ffd0d0]' };
const words = list => list.split(' ').map(w => {
  const [kind, ...rest] = w.split(':');
  return `<span class="${chip[kind]}">${rest.join(':').replace(/</g, '&lt;')}</span>`;
}).join(' ');
const cell = 'p-0 border-r border-dashed border-[#c4c4c4]';
const row = ([t, db, dt, msg, f, k], i, all) =>
  `<tr class="h-4 ${tint[k]} ${i === all.length - 1 ? 'font-bold text-black' : ''}"><td class="${cell}">${t}</td><td class="${cell}">${db}</td><td class="${cell}">${dt}</td><td class="${cell}"><div class="flex gap-[9px] pl-1">${words(msg)}</div></td><td class="p-0">${f}</td></tr>`;
// Sliver of the row that is scrolled out under the header
const sliver = (k, bars) => `<tr class="${tint[k]}"><td class="p-0" colspan="3"></td><td class="p-0"><div class="flex h-[2px] gap-2 pl-1">${bars}</div></td><td class="p-0"></td></tr>`;
const bar = { blank: '<i class="w-10 h-px"></i>', r: '<i class="w-10 h-px bg-[#f06a6c]"></i>', o: '<i class="w-10 h-px bg-[#fbb060]"></i>', g: '<i class="w-8 h-px bg-[#66f566]"></i>' };

document.getElementById('left').innerHTML = sliver('b', bar.blank + bar.r) + [
  ['194515', '-13', '-1.3', 'g:CQ r:EA2XR c:IN83', '1055', 'b'],
  ['194515', '-16', '0.3', 'n:<...> n:EA3A n:R-19', '1520', 'b'],
  ['194515', '-11', '0.3', 'g:CQ n:TM63JO', '1407', 'b'],
  ['194545', '-14', '0.2', 'o:UW1WU r:F6HTJ n:+04', '1391', 'w'],
  ['194545', '-5', '0.3', 'g:CQ r:EA2XR c:IN83', '1055', 'w'],
  ['194545', '0', '0.2', 'n:OM5UM r:F1HQM g:RR73', '939', 'w'],
  ['194545', '-14', '0.2', 'r:UR5WCE n:EA1HRR c:IN83', '2270', 'w'],
  ['194545', '-20', '0.7', 'r:YO5AVN n:F4IAA g:73', '1752', 'w'],
  ['194615', '3', '0.2', 'o:UW1WU r:F6HTJ g:RR73', '1391', 'b'],
  ['194615', '-4', '0.2', 'g:CQ n:ES r:F1HQM c:JN23', '940', 'b']
].map(row).join('');
document.getElementById('right').innerHTML = sliver('w', bar.o + bar.r + bar.g) + [
  ['194430', 'TX', '', 'r:F1HQM o:UW1WU g:73', '1173', 'p'],
  ['194445', '11', '0.4', 'g:CQ n:ES r:F1HQM c:JN23', '939', 'w'],
  ['194500', '-13', '0.2', 'r:F1HQM r:UT9UR c:KO40', '937', 'w'],
  ['194515', '-8', '0.8', 'g:CQ n:F1GTU n:JN05', '584', 'w'],
  ['194515', '-5', '0.2', 'o:UW1WU r:F6HTJ n:+04', '1390', 'w'],
  ['194530', 'TX', '', 'r:F6HTJ o:UW1WU n:R-05', '1173', 'p'],
  ['194545', '-14', '0.2', 'o:UW1WU r:F6HTJ n:+04', '1391', 'w'],
  ['194600', 'TX', '', 'r:F6HTJ o:UW1WU n:R-14', '1173', 'p'],
  ['194615', '3', '0.2', 'o:UW1WU r:F6HTJ g:RR73', '1391', 'w'],
  ['194630', 'TX', '', 'r:F6HTJ o:UW1WU g:73', '1173', 'p']
].map(row).join('');

document.getElementById('tx').innerHTML = ['F6HTJ UW1WU KN29', 'F6HTJ UW1WU -14', 'F6HTJ UW1WU R-14', 'F6HTJ UW1WU RR73', 'F6HTJ UW1WU 73', 'CQ UW1WU KN29', 'CQ 386 UW1WU KN29'].map((m, i) =>
  `<div class="flex items-center"><input aria-label="Message ${i + 1}" value="${m}" class="flex-1 min-w-0 h-[21px] px-[3px] border border-[#b4b4b4] rounded-[3px] outline-none text-[#10106a] ${i === 4 ? 'bg-[#ffd0d0]' : 'bg-white'}"><input type="radio" name="txn" aria-label="Select Tx${i + 1}" ${i === 4 ? 'checked' : ''} class="ml-[5px] appearance-none size-3 rounded-full border border-[#ccc] bg-[#f8f8f8] grid place-items-center before:size-2 before:rounded-full checked:before:bg-black"><button class="ml-[4px] w-[29px] h-[21px] border border-[#b4b4b4] rounded-[3px] bg-linear-to-b from-[#fafafa] to-[#e0e0e0]">Tx${i + 1}</button></div>`).join('');

// Frequency ruler: the window starts near 202 Hz, 0.46625 px per Hz
const W = 1256, hz = f => (f - 200) * 0.46625 - 1;
const rc = document.getElementById('ruler').getContext('2d');
rc.fillStyle = '#000';
for (let f = 220; f < 2900; f += 20) {
  const h = f % 100 ? 4 : 8;
  rc.fillRect(Math.round(hz(f)), 21 - h, 1, h);
}
rc.fillRect(0, 21, W, 1);
[[451, '#b01818'], [475, '#b01818'], [553, '#20d840'], [573, '#20d840']].forEach(([x, c]) => { rc.fillStyle = c; rc.fillRect(x, 15, 3, 6); });
let marks = '';
for (let f = 200; f <= 2800; f += 200) marks += `<span class="absolute top-0.5 -translate-x-1/2 text-[11px] leading-[14px]" style="left:${hz(f) / W * 100}%">${f}</span>`;
document.getElementById('marks').innerHTML = marks;

// Waterfall
let s = 77123;
const rnd = () => { s |= 0; s = s + 0x6D2B79F5 | 0; let t = Math.imul(s ^ s >>> 15, 1 | s); t = t + Math.imul(t ^ t >>> 7, 61 | t) ^ t; return ((t ^ t >>> 14) >>> 0) / 4294967296; };
const g = document.getElementById('fall').getContext('2d');
const X0 = 2, Y0 = 71;
const dash = (x, y, w, c, h = 1) => { g.fillStyle = c; g.fillRect(Math.round(x - X0), Math.round(y - Y0), Math.round(w), h); };
for (let y = 71; y < 345; y++) {
  for (let x = 2; x < 1258;) {
    const w = 2 + Math.floor(rnd() * 4);
    const calm = y > 276 && y < 340 ? Math.min(1, Math.max(0, (x - 650) / 430)) : 0;
    let v = rnd();
    v = v + (0.45 - v) * calm;
    dash(x, y, w, `rgb(${Math.round(v * v * 12)},${Math.round(22 + v * 44)},${Math.round(72 + v * 62)})`);
    if (rnd() < 0.04 * (1 - calm)) {
      const b = rnd(); dash(x, y, 2 + rnd() * 5, `rgb(${Math.round(30 + b * b * 110)},${Math.round(85 + b * 90)},${Math.round(150 + b * 65)})`);
    }
    x += w;
  }
}
// Quiet bands around the strong carrier
const quiet = g.createLinearGradient(556 - X0, 0, 656 - X0, 0);
[[0, 0], [.14, .8], [.75, .8], [.95, .5], [1, 0]].forEach(([p, a]) => quiet.addColorStop(p, `rgba(0,8,35,${a})`));
g.fillStyle = quiet;
g.fillRect(556 - X0, 278 - Y0, 100, 61);
const palettes = {
  hot: ['#f5a623', '#f25c1e', '#e8501c', '#ffd84a', '#ff7a1a', '#fff2a0', '#f9b53c', '#f7e04a'],
  pink: ['#ff8a5c', '#ffb0a0', '#ff5a3c', '#ffc94a', '#f7452a', '#ff9a5a', '#ffe080'],
  warm: ['#f2e24a', '#e8e86a', '#f5c52a', '#f7f7b0', '#cfe26a'],
  pale: ['#e8f08a', '#c9e0b0', '#a8d0e0', '#e8f0d0', '#d8e050'],
  cold: ['#8fc0ec', '#a8ccec', '#6fa4dc', '#c4dcf0']
};
function signal(x1, x2, y1, y2, kind, density) {
  const mid = (x1 + x2) / 2, half = (x2 - x1) / 2, p = palettes[kind];
  let c = mid;
  for (let y = y1; y < y2; y++) {
    if (y % 2 === 0) c = mid + (rnd() - 0.5) * half * 1.1;
    for (let i = 0; i < Math.ceil(density); i++) {
      if (rnd() > density / Math.ceil(density)) continue;
      const w = 3 + rnd() * 6;
      dash(c + (rnd() + rnd() - 1) * half * 0.9 - w / 2, y, w, p[Math.floor(rnd() * p.length)]);
    }
  }
}
[
  [346, 371, 78, 105, 'hot', 3], [346, 371, 100, 134, 'warm', 1.3], [555, 582, 78, 134, 'hot', 4],
  [797, 804, 88, 118, 'cold', .8], [1205, 1251, 105, 135, 'pale', .8], [1215, 1251, 78, 105, 'cold', .4], [168, 186, 110, 136, 'cold', .3],
  [345, 371, 146, 203, 'hot', 4], [398, 425, 146, 203, 'warm', 1.4], [398, 410, 188, 202, 'hot', 2],
  [556, 580, 147, 180, 'pale', .9], [965, 991, 150, 203, 'cold', .8], [797, 804, 145, 180, 'cold', .3],
  [178, 203, 214, 268, 'pale', .9], [272, 299, 214, 240, 'warm', 1.3], [272, 299, 236, 270, 'hot', 3],
  [345, 371, 214, 271, 'hot', 4.5], [398, 425, 220, 228, 'warm', 1.5], [400, 425, 228, 268, 'cold', .8],
  [555, 582, 214, 270, 'warm', 2.2], [594, 621, 226, 270, 'pale', 1.3], [724, 750, 213, 270, 'pale', 1],
  [797, 804, 240, 268, 'cold', .5], [966, 990, 218, 250, 'warm', 1], [966, 990, 250, 270, 'cold', .7],
  [128, 149, 279, 336, 'pale', .9], [350, 368, 280, 336, 'cold', .5],
  [588, 619, 280, 337, 'pink', 8], [586, 621, 280, 337, 'hot', 3], [1060, 1082, 282, 336, 'pale', .9]
].forEach(a => signal(...a));
[[65, 315], [126, 315]].forEach(([x, y]) => { dash(x, y, 7, '#f7b07a', 6); dash(x + 1, y + 1, 4, '#e6402a', 4); dash(x + 4, y, 2, '#fff', 2); });
[[536, 12], [655, 16], [1062, 24], [1125, 10], [1143, 6]].forEach(([x, w]) => { dash(x, 318, w, '#e8d860'); dash(x + 4, 317, w / 2, '#f5a03a'); });
[[1004, 12], [1092, 14], [1112, 10], [1158, 14]].forEach(([x, w]) => dash(x, 318, w, '#7f9cc0'));
for (let x = 4; x < 1256; x += 5) if (rnd() < .5) dash(x, 342 + Math.floor(rnd() * 3), 4, '#7fb0e0');
dash(270, 343, 26, '#e8d860');
[138, 140, 206, 208, 274, 341].forEach(y => dash(2, y, 1256, '#f4fbf8'));
</script>
</body>
</html>
